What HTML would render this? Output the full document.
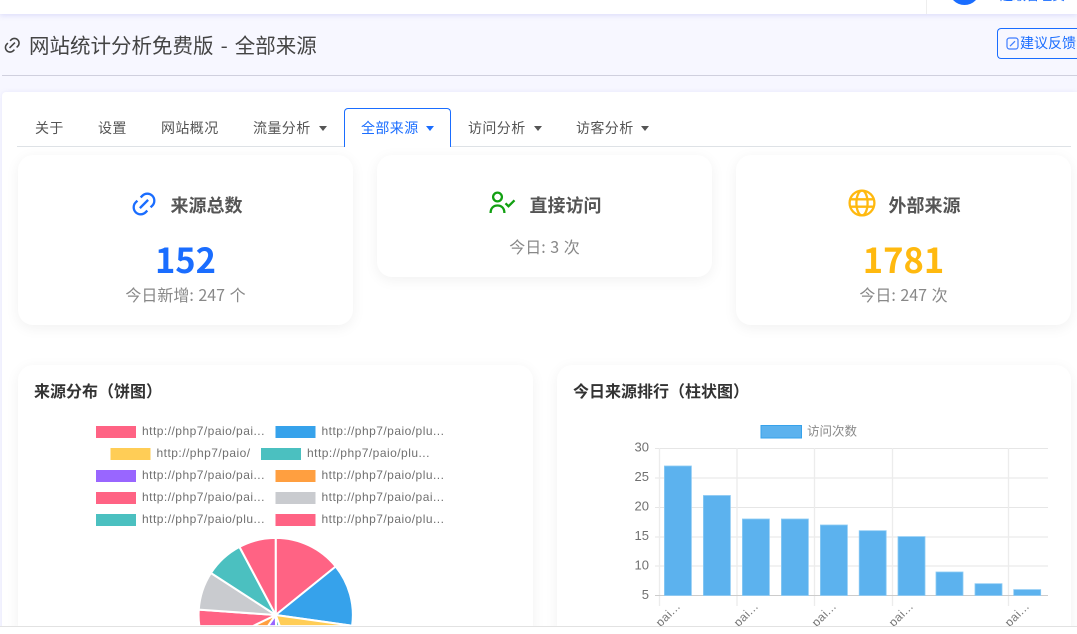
<!DOCTYPE html>
<html lang="zh-CN"><head><meta charset="utf-8"><title>全部来源</title>
<style>
*{box-sizing:border-box}
html,body{margin:0;padding:0;width:1077px;height:634px;overflow:hidden;background:#f7f7ff;font-family:"Liberation Sans","Noto Sans CJK SC",sans-serif}
#root{position:relative;width:1077px;height:634px;overflow:hidden;background:#f7f7ff}
.a{position:absolute;white-space:nowrap}
.cjk{font-family:"Noto Sans CJK SC","Liberation Sans",sans-serif}
#top{left:0;top:0;width:1077px;height:14px;background:#fff;box-shadow:0 1px 6px rgba(110,110,230,.22);overflow:hidden}
#main{left:2px;top:92px;width:1075px;height:542px;background:#fff;border-radius:4px 0 0 0;box-shadow:0 0 5px rgba(120,120,230,.12)}
.tab{top:120px;font-size:14px;line-height:16px;color:#555;letter-spacing:.4px}
.car{position:absolute;top:126px;width:0;height:0;border-left:4.5px solid transparent;border-right:4.5px solid transparent;border-top:5px solid #555}
.card{background:#fff;border-radius:15px;box-shadow:0 3px 14px rgba(0,0,0,.06)}
.ct{font-size:18px;font-weight:700;color:#555;line-height:24px;top:193px}
.sub{font-size:16px;color:#888;line-height:20px;text-align:center;word-spacing:1px}
.num{font-size:34.5px;font-weight:700;line-height:40px;text-align:center;top:238px}
.h2{font-size:16px;font-weight:700;color:#333;line-height:22px;top:379px}
</style></head><body>
<div id="root">
<div class="a" id="top">
  <div class="a" style="left:926px;top:0;width:1px;height:14px;background:#eee"></div>
  <div class="a" style="left:949px;top:-26px;width:31px;height:31px;border-radius:50%;background:#1a6dff"></div>
  <div class="a cjk" style="left:1000px;top:-13px;font-size:13px;line-height:16px;color:#1a6dff">超级管理员</div>
</div>
<svg class="a" style="left:2.500px;top:36px" width="18.500" height="18.500" viewBox="0 0 24 24" fill="#444"><path d="M18.364 15.536L16.95 14.12l1.414-1.414a5 5 0 1 0-7.071-7.071L9.879 7.05 8.464 5.636 9.88 4.222a7 7 0 0 1 9.9 9.9l-1.415 1.414zm-2.828 2.828l-1.415 1.414a7 7 0 0 1-9.9-9.9l1.415-1.414L7.05 9.88l-1.414 1.414a5 5 0 1 0 7.071 7.071l1.414-1.414 1.415 1.414zm-.708-10.607l1.415 1.415-7.071 7.07-1.415-1.414 7.071-7.07z"/></svg>
<div class="a cjk" style="left:29px;top:29.500px;font-size:20.500px;line-height:28px;color:#444;word-spacing:2.500px">网站统计分析免费版 - 全部来源</div>
<div class="a" style="left:997px;top:28px;width:80px;height:31px;border:1px solid #1a6dff;border-right:0;border-radius:4px 0 0 4px"></div>
<svg class="a" style="left:1006px;top:37px" width="13" height="13" viewBox="0 0 13 13" fill="none" stroke="#3f7dff" stroke-width="1.200"><rect x="1" y="1" width="11" height="11" rx="2.500"/><path d="M4 9.200L9 4.200"/></svg>
<div class="a cjk" style="left:1020px;top:33px;width:57px;overflow:hidden;font-size:14px;line-height:20px;color:#1a6dff">建议反馈</div>
<div class="a" style="left:2px;top:75px;width:1075px;height:1px;background:#d0d0de"></div>
<div class="a" id="main"></div>
<div class="a" style="left:17px;top:146px;width:1054px;height:1px;background:#dee2e6"></div>
<div class="a" style="left:344px;top:108px;width:107px;height:39px;background:#fff;border:1px solid #1a6dff;border-bottom:0;border-radius:4px 4px 0 0"></div>
<div class="a tab cjk" style="left:35px">关于</div>
<div class="a tab cjk" style="left:98px">设置</div>
<div class="a tab cjk" style="left:161px">网站概况</div>
<div class="a tab cjk" style="left:253px">流量分析</div><div class="car" style="left:319px"></div>
<div class="a tab cjk" style="left:361px;color:#1a6dff">全部来源</div><div class="car" style="left:426px;border-top-color:#1a6dff"></div>
<div class="a tab cjk" style="left:468px">访问分析</div><div class="car" style="left:534px"></div>
<div class="a tab cjk" style="left:576px">访客分析</div><div class="car" style="left:641px"></div>

<div class="a card" style="left:18px;top:155px;width:335px;height:170px"></div>
<div class="a card" style="left:377px;top:155px;width:335px;height:122px"></div>
<div class="a card" style="left:736px;top:155px;width:335px;height:170px"></div>

<svg class="a" style="left:130px;top:190px" width="28" height="28" viewBox="0 0 24 24" fill="#1a6dff"><path d="M18.364 15.536L16.95 14.12l1.414-1.414a5 5 0 1 0-7.071-7.071L9.879 7.05 8.464 5.636 9.88 4.222a7 7 0 0 1 9.9 9.9l-1.415 1.414zm-2.828 2.828l-1.415 1.414a7 7 0 0 1-9.9-9.9l1.415-1.414L7.05 9.88l-1.414 1.414a5 5 0 1 0 7.071 7.071l1.414-1.414 1.415 1.414zm-.708-10.607l1.415 1.415-7.071 7.07-1.415-1.414 7.071-7.07z"/></svg>
<div class="a ct cjk" style="left:170.500px">来源总数</div>
<div class="a num cjk" style="left:18px;width:335px;color:#1a6dff">152</div>
<div class="a sub cjk" style="left:18px;width:335px;top:283.500px">今日新增: 247 个</div>

<svg class="a" style="left:489px;top:191px" width="28" height="24" viewBox="0 0 28 24" fill="none" stroke="#12a012" stroke-width="2.300"><circle cx="8.500" cy="6" r="4.400"/><path d="M1.600 22c0-5 3-7.500 6.900-7.500s6.900 2.500 6.900 7.500"/><path d="M16.500 12.300l3 3 6-6"/></svg>
<div class="a ct cjk" style="left:529.500px">直接访问</div>
<div class="a sub cjk" style="left:377px;width:335px;top:235.500px">今日: 3 次</div>

<svg class="a" style="left:848px;top:189px" width="28" height="28" viewBox="0 0 28 28" fill="none" stroke="#ffb90f" stroke-width="2.300"><circle cx="14" cy="14" r="12.400"/><ellipse cx="14" cy="14" rx="5.600" ry="12.400"/><path d="M2 10.300h24M2 17.700h24"/></svg>
<div class="a ct cjk" style="left:888.500px">外部来源</div>
<div class="a num cjk" style="left:736px;width:335px;color:#ffb90f">1781</div>
<div class="a sub cjk" style="left:736px;width:335px;top:283.500px">今日: 247 次</div>

<div class="a card" style="left:18px;top:365px;width:515px;height:269px;border-radius:15px 15px 0 0"></div>
<div class="a card" style="left:557px;top:365px;width:514px;height:269px;border-radius:15px 15px 0 0"></div>
<div class="a h2 cjk" style="left:34px">来源分布（饼图）</div>
<div class="a h2 cjk" style="left:573px">今日来源排行（柱状图）</div>

<svg class="a" style="left:0;top:0;display:block;overflow:hidden" width="1077" height="634" viewBox="0 0 1077 634">
  <defs><clipPath id="c"><rect x="0" y="0" width="1077" height="626"/></clipPath></defs>
  <g font-family="Liberation Sans, sans-serif" font-size="12" fill="#707070" letter-spacing=".47">
    <rect x="96" y="426" width="40" height="12" fill="#ff6384"/><text x="142" y="435">http://php7/paio/pai...</text>
    <rect x="275.500" y="426" width="40" height="12" fill="#36a2eb"/><text x="321.500" y="435">http://php7/paio/plu...</text>
    <rect x="110.500" y="448" width="40" height="12" fill="#ffcd56"/><text x="156.500" y="457">http://php7/paio/</text>
    <rect x="261" y="448" width="40" height="12" fill="#4bc0c0"/><text x="307" y="457">http://php7/paio/plu...</text>
    <rect x="96" y="470" width="40" height="12" fill="#9966ff"/><text x="142" y="479">http://php7/paio/pai...</text>
    <rect x="275.500" y="470" width="40" height="12" fill="#ff9f40"/><text x="321.500" y="479">http://php7/paio/plu...</text>
    <rect x="96" y="492" width="40" height="12" fill="#ff6384"/><text x="142" y="501">http://php7/paio/pai...</text>
    <rect x="275.500" y="492" width="40" height="12" fill="#c9cbcf"/><text x="321.500" y="501">http://php7/paio/pai...</text>
    <rect x="96" y="514" width="40" height="12" fill="#4bc0c0"/><text x="142" y="523">http://php7/paio/plu...</text>
    <rect x="275.500" y="514" width="40" height="12" fill="#ff6384"/><text x="321.500" y="523">http://php7/paio/plu...</text>
  </g>
  <g clip-path="url(#c)">
  <g stroke="#fff" stroke-width="2" stroke-linejoin="round" transform="translate(-0.300 0) translate(276 615) scale(1.015) translate(-276 -615)">
    <path fill="#ff6384" d="M276 615L276 539A76 76 0 0 1 335.100 567.200Z"/>
    <path fill="#36a2eb" d="M276 615L335.100 567.200A76 76 0 0 1 351.300 625.600Z"/>
    <path fill="#ffcd56" d="M276 615L351.300 625.600L351 626L280 626Z"/>
    <path fill="#4bc0c0" d="M276 615L280 626L276.400 626Z"/>
    <path fill="#9966ff" d="M276 615L276.400 626L268.300 626Z"/>
    <path fill="#ff9f40" d="M276 615L268.300 626L253.400 626Z"/>
    <path fill="#ff6384" d="M276 615L253.400 626L200.800 626A76 76 0 0 1 200.200 609.700Z"/>
    <path fill="#c9cbcf" d="M276 615L200.200 609.700A76 76 0 0 1 212.200 573.600Z"/>
    <path fill="#4bc0c0" d="M276 615L212.200 573.600A76 76 0 0 1 240.300 547.900Z"/>
    <path fill="#ff6384" d="M276 615L240.300 547.900A76 76 0 0 1 276 539Z"/>
  </g>
  </g>
  <rect x="761" y="425.500" width="40.500" height="12.500" fill="#5cb2ee" stroke="#36a2eb"/>
  <text x="807" y="435.500" font-family="Liberation Sans, Noto Sans CJK SC, sans-serif" font-size="12.500" fill="#888">访问次数</text>
  <g stroke="#e6e6e6" stroke-width="1" fill="none">
    <path d="M655 448.500H1048M655 478H1048M655 507.500H1048M655 537H1048M655 566H1048"/>
    <path d="M659.500 448V606M737 448V606M814.500 448V606M892.500 448V606M1008.500 448V606" stroke="#ececec" stroke-width="1.300"/>
    <path d="M655 595.500H1048" stroke="#ccc"/>
  </g>
  <g font-family="Liberation Sans, sans-serif" font-size="13" fill="#707070" text-anchor="end">
    <text x="649" y="451.500">30</text><text x="649" y="481">25</text><text x="649" y="510.500">20</text><text x="649" y="540">15</text><text x="649" y="569.500">10</text><text x="649" y="599">5</text>
  </g>
  <g fill="#5cb2ee" stroke="#8ccaf4" stroke-width=".8">
    <rect x="664.400" y="466" width="27" height="129.500"/>
    <rect x="703.400" y="495.500" width="27" height="100"/>
    <rect x="742.400" y="519" width="27" height="76.500"/>
    <rect x="781.400" y="519" width="27" height="76.500"/>
    <rect x="820.400" y="525" width="27" height="70.500"/>
    <rect x="859.200" y="530.700" width="27" height="64.800"/>
    <rect x="898" y="536.600" width="27" height="58.900"/>
    <rect x="936" y="572" width="27" height="23.500"/>
    <rect x="975" y="583.700" width="27" height="11.800"/>
    <rect x="1013.700" y="589.600" width="27" height="5.900"/>
  </g>
  <g clip-path="url(#c)" font-family="Liberation Sans, sans-serif" font-size="12" fill="#777" text-anchor="end" letter-spacing=".47">
    <text transform="translate(681 607) rotate(-45)">pai...</text>
    <text transform="translate(759 607) rotate(-45)">pai...</text>
    <text transform="translate(837 607) rotate(-45)">pai...</text>
    <text transform="translate(914 607) rotate(-45)">pai...</text>
    <text transform="translate(1030 607) rotate(-45)">pai...</text>
  </g>
  <rect x="0" y="626" width="1077" height="8" fill="#fff"/>
  <rect x="0" y="626" width="1077" height="1" fill="#e2e2e2"/>
</svg>
</div>
</body></html>
